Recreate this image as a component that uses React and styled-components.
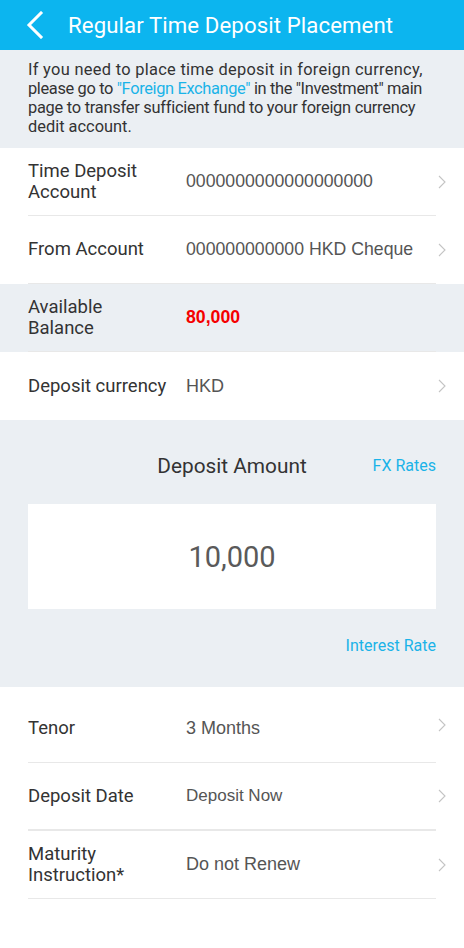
import React from "react";
import styled, { createGlobalStyle } from "styled-components";

const Global = createGlobalStyle`
  html, body { margin: 0; padding: 0; background: #fff; }
  body { font-family: Roboto, "Noto Sans", sans-serif; -webkit-font-smoothing: antialiased; }
  * { box-sizing: border-box; }
`;

const Page = styled.div`
  width: 464px;
  min-height: 948px;
  background: #fff;
  display: flex;
  flex-direction: column;
`;

const Header = styled.div`
  height: 50px;
  background: #0cb5ef;
  display: flex;
  align-items: center;
  padding-left: 26px;
  gap: 24px;
  color: #fff;
`;

const Title = styled.div`
  font-size: 22.2px;
  font-weight: 400;
  letter-spacing: 0.1px;
`;

const Notice = styled.div`
  background: #ebeff3;
  padding: 10px 28px 11px 28px;
  font-size: 16.4px;
  line-height: 19px;
  color: #333;
  height: 98px;
`;

const NoticeLine = styled.span`
  display: block;
  white-space: nowrap;
  letter-spacing: ${(p) => p.$ls || 0}px;
`;

const Link = styled.span`
  color: #1ab3e8;
`;

const Row = styled.div`
  height: ${(p) => p.$h || 68}px;
  background: ${(p) => (p.$grey ? "#ebeff3" : "#fff")};
  padding: 0 0 0 28px;
  display: flex;
`;

const RowInner = styled.div`
  flex: 1;
  display: flex;
  align-items: center;
  padding-top: ${(p) => p.$pt || 0}px;
  border-bottom: ${(p) => (p.$noline ? "none" : `${p.$line || 1}px solid #e8e8e8`)};
  margin-right: 28px;
  position: relative;
`;

const Label = styled.div`
  width: 158px;
  padding-right: 14px;
  font-size: 18.5px;
  line-height: 21px;
  color: #333;
`;

const Value = styled.div`
  flex: 1;
  font-family: "Liberation Sans", Arial, sans-serif;
  font-size: ${(p) => p.$size || 17.7}px;
  color: ${(p) => (p.$red ? "#f50000" : "#555")};
  font-weight: ${(p) => (p.$red ? 700 : 400)};
  white-space: nowrap;
`;

const Chevron = styled.svg`
  position: absolute;
  right: -10px;
  top: 50%;
  margin-top: -7px;
`;

const AmountSection = styled.div`
  background: #ebeff3;
  height: 267px;
  padding: 0 28px;
  display: flex;
  flex-direction: column;
`;

const AmountHead = styled.div`
  height: 84px;
  display: flex;
  align-items: center;
  justify-content: center;
  position: relative;
  padding-top: 8px;
`;

const AmountTitle = styled.div`
  font-size: 20.8px;
  color: #333;
`;

const SideLink = styled.div`
  color: #1ab3e8;
  font-size: 16px;
`;

const FxLink = styled(SideLink)`
  position: absolute;
  right: 0;
  top: 50%;
  margin-top: -6px;
`;

const AmountBox = styled.div`
  height: 105px;
  background: #fff;
  display: flex;
  align-items: center;
  justify-content: center;
  font-size: 29px;
  color: #5a5a5a;
`;

const RateRow = styled.div`
  display: flex;
  justify-content: flex-end;
  padding-top: 27px;
`;

const ChevronIcon = () => (
  <Chevron width="8" height="14" viewBox="0 0 8 14">
    <path d="M1 1 L7 7 L1 13" fill="none" stroke="#c4c4c4" strokeWidth="1.1" />
  </Chevron>
);

const BackIcon = () => (
  <svg width="18" height="28" viewBox="0 0 18 28">
    <path d="M15 2 L3 14 L15 26" fill="none" stroke="#fff" strokeWidth="3" strokeLinecap="square" />
  </svg>
);

export default function App() {
  return (
    <>
      <Global />
      <Page>
        <Header>
          <BackIcon />
          <Title>Regular Time Deposit Placement</Title>
        </Header>
        <Notice>
          <NoticeLine $ls={0.3}>If you need to place time deposit in foreign currency,</NoticeLine>
          <NoticeLine $ls={-0.35}>
            please go to <Link>"Foreign Exchange"</Link> in the "Investment" main
          </NoticeLine>
          <NoticeLine $ls={-0.25}>page to transfer sufficient fund to your foreign currency</NoticeLine>
          <NoticeLine>dedit account.</NoticeLine>
        </Notice>
        <Row>
          <RowInner>
            <Label>Time Deposit Account</Label>
            <Value>0000000000000000000</Value>
            <ChevronIcon />
          </RowInner>
        </Row>
        <Row>
          <RowInner>
            <Label>From Account</Label>
            <Value>000000000000 HKD Cheque</Value>
            <ChevronIcon />
          </RowInner>
        </Row>
        <Row $grey>
          <RowInner>
            <Label>Available Balance</Label>
            <Value $red>80,000</Value>
          </RowInner>
        </Row>
        <Row>
          <RowInner $noline>
            <Label>Deposit currency</Label>
            <Value $size={18}>HKD</Value>
            <ChevronIcon />
          </RowInner>
        </Row>
        <AmountSection>
          <AmountHead>
            <AmountTitle>Deposit Amount</AmountTitle>
            <FxLink>FX Rates</FxLink>
          </AmountHead>
          <AmountBox>10,000</AmountBox>
          <RateRow>
            <SideLink>Interest Rate</SideLink>
          </RateRow>
        </AmountSection>
        <Row $h={76}>
          <RowInner $pt={8}>
            <Label>Tenor</Label>
            <Value $size={18}>3 Months</Value>
            <ChevronIcon />
          </RowInner>
        </Row>
        <Row>
          <RowInner $line={2}>
            <Label>Deposit Date</Label>
            <Value $size={17}>Deposit Now</Value>
            <ChevronIcon />
          </RowInner>
        </Row>
        <Row>
          <RowInner>
            <Label>Maturity Instruction*</Label>
            <Value $size={18}>Do not Renew</Value>
            <ChevronIcon />
          </RowInner>
        </Row>
      </Page>
    </>
  );
}
